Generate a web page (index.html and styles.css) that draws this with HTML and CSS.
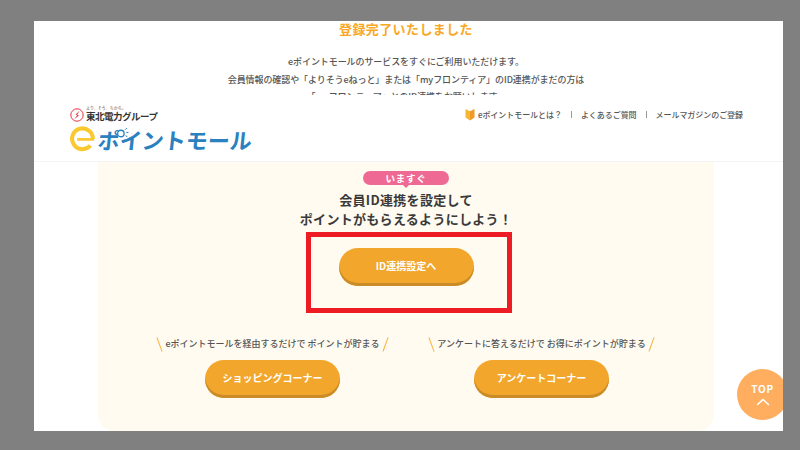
FILE: index.html
```html
<!DOCTYPE html>
<html lang="ja">
<head>
<meta charset="utf-8">
<title>登録完了</title>
<link rel="stylesheet" href="styles.css">
</head>
<body>
<main class="panel">
  <section class="intro">
    <h1 class="intro-title">登録完了いたしました</h1>
    <p class="intro-line">eポイントモールのサービスをすぐにご利用いただけます。</p>
    <p class="intro-line">会員情報の確認や「よりそうeねっと」または「myフロンティア」のID連携がまだの方は</p>
    <p class="intro-line">「myフロンティア」とのID連携をお願いします。</p>
  </section>
  <header class="site-header">
    <div class="logo">
      <div class="logo-group">
        <svg class="bolt" viewBox="0 0 14 14" aria-hidden="true">
          <circle cx="7" cy="7" r="6.2" fill="#fff" stroke="#e8343c" stroke-width="1"/>
          <path d="M9.6 2.8 5.6 6.6 7.2 7.2 4.2 11.2 9 7.4 7.2 6.7Z" fill="#e8343c"/>
        </svg>
        <div class="logo-group-text">
          <span class="tagline">より、そう、ちから。</span>
          <span class="group-name">東北電力グループ</span>
        </div>
      </div>
      <div class="logo-main">
        <svg class="logo-e" viewBox="0 0 26 26" aria-hidden="true">
          <path d="M21.2 19.8A10.8 10.8 0 1 1 23.8 13" fill="none" stroke="#fbc92f" stroke-width="4.2"/>
          <path d="M7.5 13.4H25" fill="none" stroke="#fbc92f" stroke-width="2.8"/>
        </svg>
        <span class="logo-name">ポイントモール</span>
        <svg class="logo-bulb" viewBox="0 0 12 12" aria-hidden="true">
          <circle cx="4.5" cy="6" r="3" fill="#fff" stroke="#2b80bf" stroke-width="1.2"/>
          <path d="M8.5 2.5 10 1M9.5 5H11.5M8.8 8 10.5 9" stroke="#2b80bf" stroke-width=".9"/>
        </svg>
      </div>
    </div>
    <nav class="top-nav">
      <svg class="nav-mark" viewBox="0 0 10 13" aria-hidden="true">
        <path d="M0.5 1 5 3.2V12.5L0.5 9.6Z" fill="#f7b733"/>
        <path d="M9.5 1 5 3.2V12.5L9.5 9.6Z" fill="#ef9a26"/>
      </svg>
      <a class="nav-link">eポイントモールとは？</a>
      <span class="nav-sep"></span>
      <a class="nav-link">よくあるご質問</a>
      <span class="nav-sep"></span>
      <a class="nav-link">メールマガジンのご登録</a>
    </nav>
  </header>
  <section class="card">
    <div class="badge">いますぐ</div>
    <h2 class="card-title">会員ID連携を設定して<br>ポイントがもらえるようにしよう！</h2>
    <div class="highlight">
      <a class="btn">ID連携設定へ</a>
    </div>
    <div class="corners">
      <div class="corner">
        <p class="caption">eポイントモールを経由するだけで ポイントが貯まる</p>
        <a class="btn">ショッピングコーナー</a>
      </div>
      <div class="corner">
        <p class="caption">アンケートに答えるだけで お得にポイントが貯まる</p>
        <a class="btn">アンケートコーナー</a>
      </div>
    </div>
  </section>
  <a class="to-top">
    <span>TOP</span>
    <svg class="to-top-arrow" viewBox="0 0 14 8" aria-hidden="true">
      <path d="M1 7 7 1.5 13 7" fill="none" stroke="#fff" stroke-width="1.6"/>
    </svg>
  </a>
</main>
</body>
</html>
```
FILE: styles.css
```css
* { box-sizing: border-box; }
html, body { margin: 0; height: 100%; }
body {
  background: #808080;
  padding: 21px 17px 19px 34px;
  font-family: "Noto Sans CJK JP", "Noto Sans", sans-serif;
  color: #444;
  overflow: hidden;
}
p, h1, h2 { margin: 0; }

.panel {
  position: relative;
  width: 749px;
  height: 410px;
  background: #fff;
  overflow: hidden;
}

.intro {
  height: 74px;
  padding-right: 5px;
  overflow: hidden;
  text-align: center;
}
.intro-title {
  line-height: 16px;
  font-size: 13px;
  font-weight: 700;
  letter-spacing: .4px;
  color: #f9a825;
}
.intro-line {
  font-size: 9px;
  font-weight: 500;
  line-height: 17.5px;
  letter-spacing: -.08px;
  color: #555;
}
.intro-title + .intro-line { margin-top: 16px; }

.site-header {
  height: 67px;
  padding: 11px 40px 0 36px;
  display: flex;
  justify-content: space-between;
  align-items: flex-start;
  background: #fff;
  border-bottom: 1px solid #f4f4f4;
}
.logo { display: flex; flex-direction: column; }
.logo-group { display: flex; align-items: flex-end; gap: 2px; height: 16px; }
.bolt { width: 14px; height: 14px; }
.logo-group-text { display: flex; flex-direction: column; }
.tagline { font-size: 4px; line-height: 5px; color: #555; }
.group-name {
  font-size: 9.5px;
  line-height: 11px;
  font-weight: 700;
  color: #333;
  letter-spacing: -.5px;
}
.logo-main { position: relative; display: flex; align-items: center; gap: 3px; margin-top: 4px; }
.logo-e { width: 25px; height: 26px; }
.logo-name {
  font-size: 22px;
  line-height: 26px;
  font-weight: 700;
  color: #2b80bf;
  transform: skewX(-6deg);
  white-space: nowrap;
}
.logo-bulb {
  position: absolute;
  left: 46px;
  top: 1px;
  width: 13px;
  height: 13px;
}

.top-nav { display: flex; align-items: center; margin-top: 1px; height: 14px; }
.nav-mark { width: 10px; height: 13px; margin-right: 3px; }
.nav-link {
  font-size: 8px;
  font-weight: 500;
  letter-spacing: -.05px;
  color: #555;
  white-space: nowrap;
}
.nav-sep {
  width: 1px;
  height: 7px;
  margin: 0 9px;
  background: #999;
}

.card {
  width: 616px;
  height: 269px;
  margin-left: 64px;
  padding-top: 9px;
  background: #fffbf0;
  border-radius: 0 0 16px 16px;
  display: flex;
  flex-direction: column;
  align-items: center;
}
.badge {
  position: relative;
  width: 86px;
  height: 14px;
  line-height: 14px;
  border-radius: 7px;
  background: #ee6a94;
  color: #fff;
  font-size: 9.5px;
  font-weight: 700;
  letter-spacing: .8px;
  text-align: center;
}
.badge::after {
  content: "";
  position: absolute;
  left: 50%;
  top: 100%;
  margin-left: -3px;
  border: 3px solid transparent;
  border-top-color: #ee6a94;
  border-bottom-width: 0;
}
.card-title {
  margin-top: 5px;
  font-size: 13px;
  line-height: 19px;
  font-weight: 700;
  letter-spacing: .3px;
  color: #3a3a3a;
  text-align: center;
}
.highlight {
  width: 206px;
  height: 81px;
  margin: 4px 0 0 6px;
  padding: 11px 6px 0 0;
  border: 5px solid #ed1c24;
  display: flex;
  justify-content: center;
}
.btn {
  display: block;
  width: 135px;
  height: 38px;
  line-height: 35px;
  border-radius: 19px;
  background: #f2a62b;
  box-shadow: inset 0 -3px 0 #c98c28;
  color: #fff;
  font-size: 10px;
  font-weight: 700;
  text-align: center;
}
.corners {
  margin-top: 24px;
  padding-left: 2px;
  display: flex;
  justify-content: center;
  gap: 38px;
}
.corner {
  width: 231px;
  display: flex;
  flex-direction: column;
  align-items: center;
}
.caption {
  display: flex;
  justify-content: center;
  align-items: center;
  gap: 5px;
  height: 14px;
  line-height: 14px;
  margin-bottom: 9px;
  font-size: 9px;
  font-weight: 500;
  color: #555;
  white-space: nowrap;
}
.caption::before, .caption::after {
  content: "";
  flex: none;
  width: 1.4px;
  height: 15px;
  background: #f7b23b;
}
.caption::before { transform: rotate(-20deg); }
.caption::after { transform: rotate(20deg); }

.to-top {
  position: absolute;
  left: 703px;
  top: 348px;
  width: 51px;
  height: 51px;
  border-radius: 50%;
  background: #ffad5f;
  color: #fff;
  font-size: 10px;
  font-weight: 700;
  letter-spacing: .8px;
  text-align: center;
  padding-top: 13px;
  line-height: 13px;
}
.to-top span { display: block; }
.to-top-arrow { display: block; width: 14px; height: 8px; margin: 3px auto 0; }
```
